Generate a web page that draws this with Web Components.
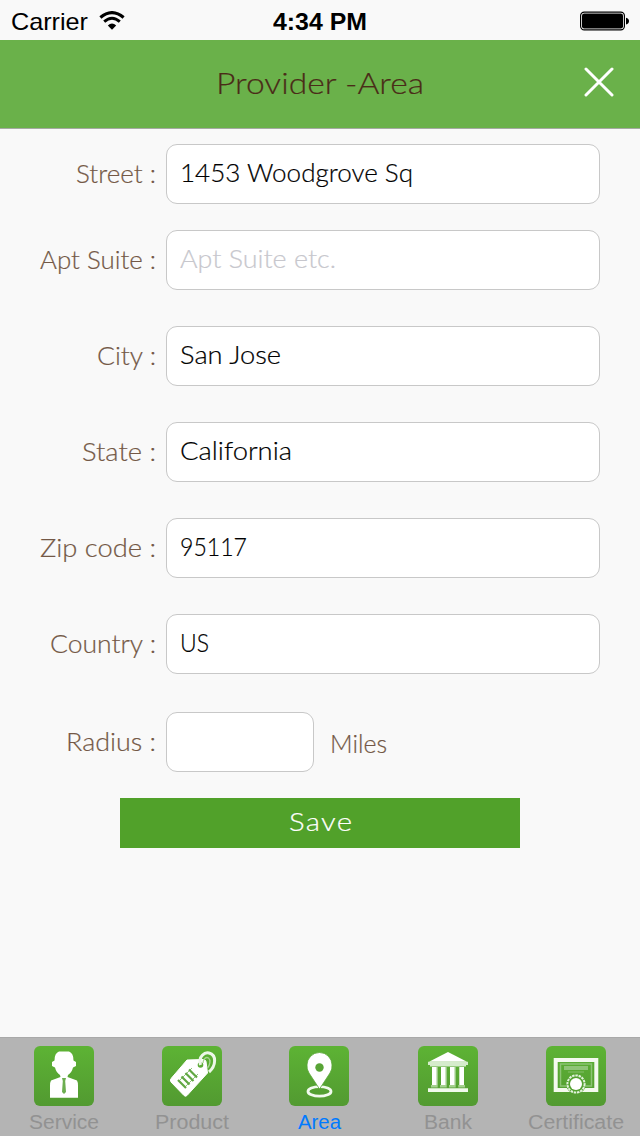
<!DOCTYPE html>
<html lang="en">
<head>
<meta charset="utf-8">
<title>Provider - Area</title>
<style>
html,body{margin:0;padding:0;background:#f9f9f9}
body{font-family:Lato,"Liberation Sans",sans-serif;width:640px;height:1136px;overflow:hidden}
</style>
</head>
<body>
<provider-app></provider-app>
<script>
function define(name, html, setup) {
  customElements.define(name, class extends HTMLElement {
    connectedCallback() {
      if (this.shadowRoot) return;
      this.attachShadow({ mode: 'open' }).innerHTML = html;
      if (setup) setup(this, this.shadowRoot);
    }
  });
}

// Text widened to a given advance width: glyphs stretch a little, tracking takes the rest.
define('tracked-text', `<style>
  :host{display:inline-block;white-space:pre;text-align:left}
  span{display:inline-block;white-space:pre;transform-origin:0 50%}
</style><span></span>`, (el, root) => {
  const s = root.querySelector('span');
  const text = el.getAttribute('text');
  const target = +el.getAttribute('width');
  s.textContent = text;
  const w = s.getBoundingClientRect().width;
  const scale = Math.min(1.13, Math.max(0.9, target / w));
  s.style.letterSpacing = (target / scale - w) / (text.length - 1) + 'px';
  s.style.transform = `scaleX(${scale})`;
  el.style.width = target + 'px';
});

define('status-bar', `<style>
  :host{display:grid;grid-template-columns:1fr auto 1fr;height:40px;line-height:40px;color:#000;font-family:"Liberation Sans",sans-serif;font-size:24px;align-items:center}
  .left{display:flex;align-items:center;padding-left:11px;gap:11px}
  .right{display:flex;justify-content:flex-end;padding-right:11px}
  tracked-text{height:40px;margin-top:2px}
  b{font-size:24px}
  svg{display:block}
</style>
<div class="left"><tracked-text text="Carrier" width="77"></tracked-text>
<svg width="26" height="20" viewBox="0 0 26 20" fill="none" stroke="#000"><path d="M1.4 6.5Q13-3.2 24.6 6.5" stroke-width="3.2"/><path d="M5.2 10.7Q13 3.8 20.8 10.7" stroke-width="2.9"/><path d="M8.8 14.4Q13 10.6 17.2 14.4L13 18.8Z" fill="#000" stroke="none"/></svg></div>
<b><tracked-text text="4:34 PM" width="94"></tracked-text></b>
<div class="right"><svg width="49" height="20" viewBox="0 0 49 20"><rect x=".6" y="1.1" width="43.8" height="17.8" rx="3.6" fill="#fff" stroke="#000" stroke-width="1.2"/><rect x="2" y="2.500" width="41" height="15" rx="2.2"/><path d="M46 6.7Q49 7.500 49 10T46 13.500Z"/></svg></div>`);

define('nav-header', `<style>
  :host{display:grid;grid-template-columns:1fr auto 1fr;height:88px;background:#6ab14a;border-bottom:1px solid #a5aaa2;color:#4a2b18;font-size:30px;font-weight:300;align-items:center}
  .title{grid-column:2;line-height:84px;height:88px;-webkit-text-stroke:.2px}
  svg{justify-self:end;margin-right:26px;margin-top:-4px;display:block}
</style><div class="title"><slot></slot></div>
<svg width="30" height="30" viewBox="0 0 30 30"><path d="M2 2 28 28M28 2 2 28" stroke="#fff" stroke-width="3" stroke-linecap="round"/></svg>`);

define('form-row', `<style>
  :host{display:flex;height:60px;line-height:58px;font-size:25px;color:#735846;font-weight:300}
  .label{width:156px;margin-right:10px;text-align:right;-webkit-text-stroke:.2px}
  .box{box-sizing:border-box;width:434px;height:60px;border:1px solid #c8c8c8;border-radius:11px;background:#fff;padding-left:13px;line-height:54px;color:#000;-webkit-text-stroke:.2px}
  :host([empty]) .box{color:#c7c7cd}
  :host([small]) .box{width:148px;margin-right:16px}
</style><div class="label"></div><div class="box"></div><slot></slot>`, (el, root) => {
  const put = (cls, key) => {
    if (!el.hasAttribute(key)) return;
    const t = document.createElement('tracked-text');
    t.setAttribute('text', el.getAttribute(key));
    t.setAttribute('width', el.getAttribute(key + '-width'));
    root.querySelector(cls).append(t);
  };
  put('.label', 'label');
  put('.box', 'value');
});

define('save-button', `<style>
  :host{display:block;width:400px;height:50px;line-height:46px;background:#51a12a;color:#fff;text-align:center;font-size:26px;font-weight:300;-webkit-text-stroke:.2px}
</style><slot></slot>`);

define('tab-item', `<style>
  :host{display:flex;flex-direction:column;align-items:center;width:128px;color:#929292;font-family:"Liberation Sans",sans-serif;font-size:20px;line-height:24px}
  :host([active]){color:#007aff}
  .tile{width:60px;height:60px;margin:8px 0 4px;border-radius:6px;background:linear-gradient(#5db334,#529a31);overflow:hidden}
  ::slotted(svg){display:block;width:60px;height:60px}
</style><div class="tile"><slot></slot></div><slot name="label"></slot>`);

define('tab-bar', `<style>
  :host{display:flex;box-sizing:border-box;height:99px;background:#b4b4b4;border-top:1px solid #a9a9a9}
</style>
<tab-item><svg viewBox="0 0 60 60" fill="#fff"><path d="M25 5.5H35Q39.5 7 39.5 14.5L42 16V20L39 21.5Q38 26 34 29L33.5 31 43 34.5Q44 36 44 40V51.7H16V40Q16 36 17 34.5L26.500 31 26 29Q22 26 21 21.500L18 20V16L20.500 14.500Q20.500 7 25 5.500Z"/><path d="M28 32H32L31.200 35 32 46 30 48 28 46 28.800 35Z" fill="#6cae50"/></svg><tracked-text slot="label" text="Service" width="70"></tracked-text></tab-item>
<tab-item><svg viewBox="0 0 60 60" fill="none" stroke="#fff"><path d="M25 14 41 13.500Q43.500 13.500 44 15.500L45.500 27 25 49.500Q23.500 51 22 49.500L9 36Q7.500 34 9.500 32Z" fill="#fff" stroke="#fff" stroke-width="1"/><circle cx="38.500" cy="19" r="2.800" fill="#5cab35" stroke="none"/><path d="M38.500 19C36 10 43 6 47 7C55 9 54 20 47 26" stroke="#edf7e8" stroke-width="3"/><path d="M41 17C41 13 44 10.500 46.500 12C49 14 48 19 45.500 22" stroke="#a9d494" stroke-width="1.300"/><g stroke="#61a743" stroke-width="2.200"><path d="M16 34 24 42M19.500 30.500 27.500 38.500M23.500 27 31.500 35M27 23.500 35 31.500"/><path d="M18 34 30 22M24 40 36 28" stroke-width=".7"/></g></svg><tracked-text slot="label" text="Product" width="74"></tracked-text></tab-item>
<tab-item active style="margin:0 1px 0 -1px"><svg viewBox="0 0 60 60"><ellipse cx="30.500" cy="45.400" rx="11.500" ry="4.800" fill="none" stroke="#f2faee" stroke-width="2.800"/><path d="M30.500 43 20 27Q17.500 23 18 19A12.500 12.500 0 0 1 43 19Q43.500 23 41 27Z" fill="#fff" stroke="#59a637" stroke-width=".8"/><circle cx="30.500" cy="21.500" r="4.200" fill="#58a436"/></svg><tracked-text slot="label" text="Area" width="43"></tracked-text></tab-item>
<tab-item><svg viewBox="0 0 60 60" fill="#fff"><path d="M30 6 49 15.700H11Z"/><path d="M10 15.700H50V19H48V20.500H12V19H10Z" fill="#d5eccb"/><path d="M14 21H18.700V39H14ZM23 21H27.700V39H23ZM32 21H36.700V39H32ZM41.300 21H46V39H41.300Z"/><path d="M13 39H19.700V41.500H13ZM22 39H28.700V41.500H22ZM31 39H37.700V41.500H31ZM40.300 39H47V41.500H40.300Z" fill="#a5d08f"/><path d="M19 20.500H20V39H19ZM28 20.500H29V39H28ZM37 20.500H38V39H37Z" fill="#99c983"/><path d="M10 42.300H50V46H10Z" fill="#f1faec"/></svg><tracked-text slot="label" text="Bank" width="48"></tracked-text></tab-item>
<tab-item><svg viewBox="0 0 60 60" fill="none"><rect x="9.700" y="14" width="40.600" height="30" stroke="#f4faef" stroke-width="4"/><rect x="14.500" y="18" width="31" height="22" stroke="#8cc474" stroke-width="1.500"/><path d="M18 22H42" stroke="#8fc477" stroke-width="4"/><path d="M22 26H38" stroke="#77b85a" stroke-width="1.500"/><circle cx="30" cy="38" r="10" fill="#55a132"/><circle cx="30" cy="38" r="8.600" stroke="#e2f2dc" stroke-width="2" stroke-dasharray="2.500 .8"/><circle cx="30" cy="38" r="6" fill="#fff"/></svg><tracked-text slot="label" text="Certificate" width="96"></tracked-text></tab-item>`);

define('provider-app', `<style>
  :host{display:flex;flex-direction:column;width:640px;height:1136px;background:#f9f9f9}
  main{flex:1;display:flex;flex-direction:column;gap:36px;padding-top:15px}
  .first{margin-bottom:-10px}
  .last{margin-top:2px}
  .miles{line-height:62px;-webkit-text-stroke:.2px}
  save-button{align-self:center;margin-top:-10px}
</style>
<status-bar></status-bar>
<nav-header><tracked-text text="Provider -Area" width="208"></tracked-text></nav-header>
<main>
<form-row class="first" label="Street :" label-width="80" value="1453 Woodgrove Sq" value-width="233"></form-row>
<form-row label="Apt Suite :" label-width="116" value="Apt Suite etc." value-width="156" empty></form-row>
<form-row label="City :" label-width="59" value="San Jose" value-width="101"></form-row>
<form-row label="State :" label-width="74" value="California" value-width="112"></form-row>
<form-row label="Zip code :" label-width="116" value="95117" value-width="67"></form-row>
<form-row label="Country :" label-width="106" value="US" value-width="29"></form-row>
<form-row class="last" label="Radius :" label-width="90" small><tracked-text class="miles" text="Miles" width="57"></tracked-text></form-row>
<save-button><tracked-text text="Save" width="63"></tracked-text></save-button>
</main>
<tab-bar></tab-bar>`);
</script>
</body>
</html>
